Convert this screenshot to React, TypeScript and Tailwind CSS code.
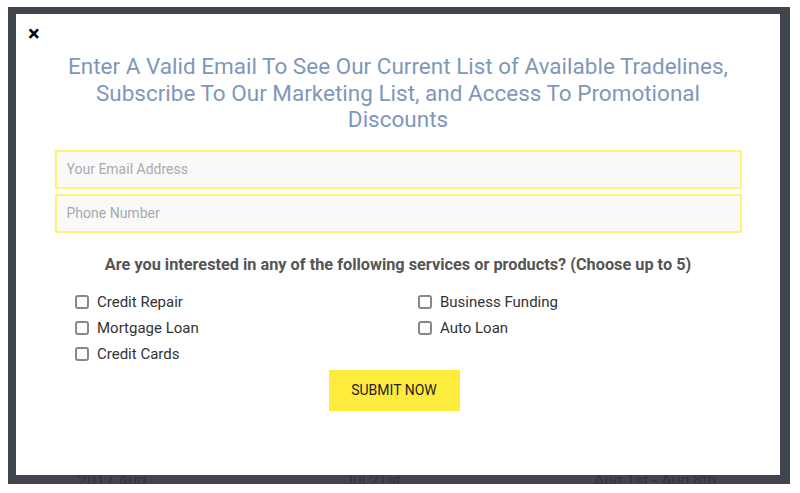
const leftItems = ["Credit Repair", "Mortgage Loan", "Credit Cards"];
const rightItems = ["Business Funding", "Auto Loan"];

function Option({ label }: { label: string }) {
  return (
    <label className="flex items-center h-[26px] text-[15px] text-[#333]">
      <span className="w-[14px] h-[14px] border-2 border-[#888] rounded-[3px] bg-white mr-[8px]" />
      {label}
    </label>
  );
}

export default function App() {
  return (
    <div className="w-[800px] h-[493px] bg-white overflow-hidden font-['Roboto',sans-serif]">
      <div className="relative overflow-hidden ml-[8px] mt-[7px] w-[782px] h-[477px] bg-[#40444d] pt-[7px] pl-[8px] pr-[10px] pb-[9px]">
        <div className="absolute left-0 right-0 top-[466px] flex text-[16px] text-[#33363e] leading-none">
          <span className="ml-[70px]">2017 Aug</span>
          <span className="ml-[198px]">Jul 21st</span>
          <span className="ml-[193px]">Aug 1st - Aug 8th</span>
        </div>
        <div className="relative h-full bg-white flex flex-col items-center">
          <button className="absolute left-[12px] top-[9px] text-[22px] leading-none font-bold text-black">
            ×
          </button>
          <h2 className="mt-[39px] w-[668px] text-center text-[22.5px] leading-[26.5px] text-[#7f97ba] font-normal">
            Enter A Valid Email To See Our Current List of Available Tradelines, Subscribe To Our Marketing List, and Access To Promotional Discounts
          </h2>
          <div className="mt-[17px] w-[687px] flex flex-col gap-[5px]">
            <input
              placeholder="Your Email Address"
              className="h-[39px] border-2 border-[#fff275] bg-[#f9f9f9] px-[10px] text-[14px] placeholder:text-[#aaa] outline-none"
            />
            <input
              placeholder="Phone Number"
              className="h-[39px] border-2 border-[#fff275] bg-[#f9f9f9] px-[10px] text-[14px] placeholder:text-[#aaa] outline-none"
            />
          </div>
          <p className="mt-[20px] text-[16.3px] font-bold text-[#555]">
            Are you interested in any of the following services or products? (Choose up to 5)
          </p>
          <div className="mt-[12px] w-[646px] flex">
            <div className="w-[343px] flex flex-col">
              {leftItems.map((i) => (
                <Option key={i} label={i} />
              ))}
            </div>
            <div className="flex flex-col">
              {rightItems.map((i) => (
                <Option key={i} label={i} />
              ))}
            </div>
          </div>
          <button className="mt-[3px] mr-[8px] w-[131px] h-[41px] bg-[#ffeb3b] text-[14px] text-[#222] uppercase">
            Submit Now
          </button>
        </div>
      </div>
    </div>
  );
}
